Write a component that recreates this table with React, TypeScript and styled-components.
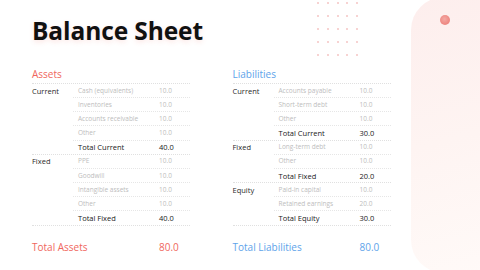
import React from "react";
import styled, { createGlobalStyle } from "styled-components";

const Global = createGlobalStyle`
  html, body { margin: 0; padding: 0; background: #ffffff; }
  body { font-family: "Open Sans", "Noto Sans", sans-serif; }
  * { box-sizing: border-box; }
`;

type Item = [string, string];
type Group = { label: string; items: Item[]; total: Item };

const assets: Group[] = [
  {
    label: "Current",
    items: [
      ["Cash (equivalents)", "10.0"],
      ["Inventories", "10.0"],
      ["Accounts receivable", "10.0"],
      ["Other", "10.0"],
    ],
    total: ["Total Current", "40.0"],
  },
  {
    label: "Fixed",
    items: [
      ["PPE", "10.0"],
      ["Goodwill", "10.0"],
      ["Intangible assets", "10.0"],
      ["Other", "10.0"],
    ],
    total: ["Total Fixed", "40.0"],
  },
];

const liabilities: Group[] = [
  {
    label: "Current",
    items: [
      ["Accounts payable", "10.0"],
      ["Short-term debt", "10.0"],
      ["Other", "10.0"],
    ],
    total: ["Total Current", "30.0"],
  },
  {
    label: "Fixed",
    items: [
      ["Long-term debt", "10.0"],
      ["Other", "10.0"],
    ],
    total: ["Total Fixed", "20.0"],
  },
  {
    label: "Equity",
    items: [
      ["Paid-in capital", "10.0"],
      ["Retained earnings", "20.0"],
    ],
    total: ["Total Equity", "30.0"],
  },
];

const Page = styled.div`
  position: relative;
  width: 480px;
  height: 270px;
  overflow: hidden;
  background: #ffffff;
  padding-left: 32px;
`;

const SidePanel = styled.div`
  position: absolute;
  left: 411px;
  top: -3px;
  width: 110px;
  height: 276px;
  border-radius: 33px;
  background: linear-gradient(165deg, #fdeeed 0%, #fef4f2 50%, #fffaf8 100%);
`;

const Accent = styled.div`
  position: absolute;
  left: 440px;
  top: 15px;
  width: 10px;
  height: 10px;
  border-radius: 50%;
  background: radial-gradient(circle at 45% 40%, #f4a9a4 0%, #ee8a84 60%, #ec817b 100%);
`;

const DotGrid = styled.div`
  position: absolute;
  left: 317px;
  top: 2px;
  display: grid;
  grid-template-columns: repeat(5, 2px);
  grid-auto-rows: 2px;
  column-gap: 7.75px;
  row-gap: 11px;
`;

const Dot = styled.span`
  width: 2px;
  height: 2px;
  background: #f7d3d2;
`;

const Title = styled.h1`
  position: relative;
  margin: 16px 0 0 0;
  height: 30px;
  font-size: 24.5px;
  line-height: 30px;
  font-weight: 700;
  color: #111111;
  letter-spacing: -0.1px;
  text-shadow: 0 2px 5px rgba(240, 110, 100, 0.18);
`;

const Columns = styled.div`
  position: relative;
  display: flex;
  gap: 42.5px;
  margin-top: 20px;
`;

const Section = styled.section`
  width: 158px;
  display: flex;
  flex-direction: column;
`;

const Heading = styled.div<{ $color: string }>`
  height: 18px;
  line-height: 17px;
  font-size: 10px;
  color: ${(p) => p.$color};
  border-bottom: 1px dotted #e0e0e0;
`;

const GroupBox = styled.div`
  display: grid;
  grid-template-columns: 41px 1fr;
  border-bottom: 1px dotted #e0e0e0;
`;

const GroupLabel = styled.div`
  font-size: 7.5px;
  line-height: 12px;
  color: #2a2a2a;
  padding-top: 0.5px;
`;

const Rows = styled.div`
  display: flex;
  flex-direction: column;
`;

const Row = styled.div<{ $total?: boolean }>`
  display: grid;
  grid-template-columns: 1fr 31px;
  align-items: center;
  height: 14.17px;
  padding-left: 5px;
  font-size: ${(p) => (p.$total ? "7.5px" : "6.5px")};
  color: ${(p) => (p.$total ? "#1a1a1a" : "#bdbdbd")};
  border-bottom: 1px dotted #e6e6e6;
  &:last-child {
    border-bottom: none;
    height: 13.17px;
  }
`;

const Cell = styled.span`
  white-space: nowrap;
  line-height: 10px;
`;

const TotalLine = styled.div<{ $color: string }>`
  display: grid;
  grid-template-columns: 1fr 31px;
  margin-top: 14px;
  font-size: 10px;
  line-height: 14px;
  color: ${(p) => p.$color};
`;

function BalanceSection({
  heading,
  color,
  groups,
  total,
}: {
  heading: string;
  color: string;
  groups: Group[];
  total: Item;
}) {
  return (
    <Section>
      <Heading $color={color}>{heading}</Heading>
      {groups.map((g) => (
        <GroupBox key={g.label}>
          <GroupLabel>{g.label}</GroupLabel>
          <Rows>
            {g.items.map(([name, value], i) => (
              <Row key={i}>
                <Cell>{name}</Cell>
                <Cell>{value}</Cell>
              </Row>
            ))}
            <Row $total>
              <Cell>{g.total[0]}</Cell>
              <Cell>{g.total[1]}</Cell>
            </Row>
          </Rows>
        </GroupBox>
      ))}
      <TotalLine $color={color}>
        <span>{total[0]}</span>
        <span>{total[1]}</span>
      </TotalLine>
    </Section>
  );
}

export default function App() {
  return (
    <>
      <Global />
      <Page>
        <SidePanel />
        <Accent />
        <DotGrid>
          {Array.from({ length: 25 }).map((_, i) => (
            <Dot key={i} />
          ))}
        </DotGrid>
        <Title>Balance Sheet</Title>
        <Columns>
          <BalanceSection
            heading="Assets"
            color="#f0665d"
            groups={assets}
            total={["Total Assets", "80.0"]}
          />
          <BalanceSection
            heading="Liabilities"
            color="#5ea3ea"
            groups={liabilities}
            total={["Total Liabilities", "80.0"]}
          />
        </Columns>
      </Page>
    </>
  );
}
